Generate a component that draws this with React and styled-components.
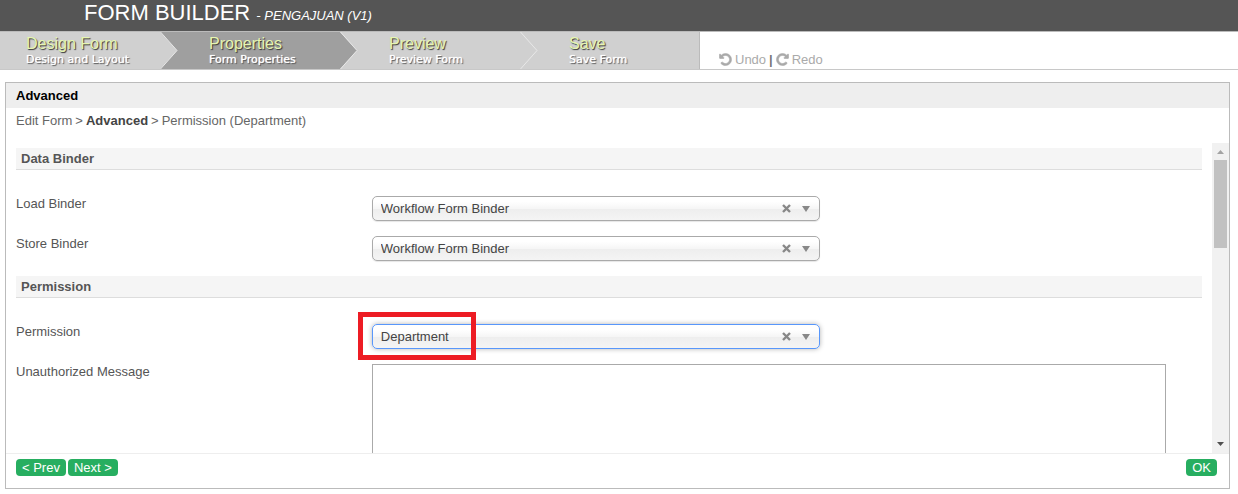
import React, { useState } from "react";
import styled, { createGlobalStyle } from "styled-components";

const GlobalStyle = createGlobalStyle`
  * { box-sizing: border-box; }
  body {
    margin: 0;
    background: #fff;
    color: #555;
    font: 13px/15px "Liberation Sans", Arial, sans-serif;
  }
  button, select, textarea { font: inherit; }
`;

const Page = styled.div`
  display: flex;
  flex-direction: column;
  height: 100vh;
`;

const Header = styled.header`
  flex: none;
  height: 31px;
  padding-left: 84px;
  background: #555;
  color: #fff;
`;

const Title = styled.h1`
  margin: 0;
  font-size: 22px;
  line-height: 25px;
  font-weight: normal;
  white-space: nowrap;
`;

const FormName = styled.em`
  font-size: 13px;
`;

const StepBar = styled.nav`
  flex: none;
  display: flex;
  height: 39px;
  border-top: 1px solid #bbb;
  border-bottom: 1px solid #c8c8c8;
`;

const Step = styled.a`
  display: flex;
  justify-content: space-between;
  width: ${(p) => (p.$last ? 160 : 180)}px;
  padding-left: ${(p) => (p.$first ? 26 : 29)}px;
  background: ${(p) => (p.$active ? "#9f9f9f" : "#d0d0d0")};
  border-right: ${(p) => (p.$last ? "1px solid #bbb" : "0")};
  text-decoration: none;
  white-space: nowrap;
`;

const StepText = styled.span`
  display: flex;
  flex-direction: column;
  width: 0;
  padding-top: 4px;
`;

const StepName = styled.span`
  color: #e6f5b0;
  font-size: 16px;
  line-height: 16px;
  text-shadow: 1px 1px 1px #333;
`;

const StepNote = styled.span`
  color: #fff;
  font: 11px/16px "DejaVu Sans", Verdana, sans-serif;
  text-shadow: 0 0 1px #fff, 1px 1px 1px #444;
`;

const History = styled.div`
  display: flex;
  align-items: center;
  gap: 3px;
  padding: 17px 0 0 19px;
`;

const Divider = styled.span`
  color: #777;
  font-weight: bold;
`;

const HistoryButton = styled.button`
  display: flex;
  align-items: center;
  gap: 3px;
  padding: 0;
  border: 0;
  background: none;
  color: #aaa;
`;

const Panel = styled.main`
  flex: 1;
  min-height: 0;
  display: flex;
  flex-direction: column;
  margin: 12px 8px 5px 5px;
  border: 1px solid #bbb;
`;

const PanelTitle = styled.h2`
  margin: 0;
  padding: 5px 10px;
  background: #eee;
  color: #000;
  font-size: 13px;
  line-height: 15px;
`;

const Breadcrumb = styled.nav`
  display: flex;
  gap: 3px;
  padding: 5px 10px 15px;
  color: #666;

  a { color: inherit; text-decoration: none; }
  strong { color: #444; }
`;

const ScrollArea = styled.div`
  flex: 1;
  min-height: 0;
  display: flex;
`;

const Form = styled.form`
  flex: 1;
  overflow: hidden;
  padding: 5px 10px 0;
`;

const SectionTitle = styled.h3`
  margin: 0 0 26px;
  padding: 3px 5px;
  border-bottom: 1px solid #ddd;
  background: #f5f5f5;
  font-size: 13px;
  line-height: 15px;
`;

const Row = styled.div`
  display: flex;
  min-height: 40px;
`;

const Label = styled.label`
  flex: none;
  width: 30%;
`;

const Value = styled.div`
  flex: 1;
  padding-right: 36px;
`;

const SelectFrame = styled.div`
  position: relative;
  display: flex;
  align-items: center;
  width: min(448px, 100%);
  height: 25px;
  padding-right: 9px;
  border: 1px solid ${(p) => (p.$focused ? "#5897fb" : "#aaa")};
  border-radius: 5px;
  background: linear-gradient(#fff 20%, #f6f6f6 50%, #eee 52%, #f4f4f4 100%);
  box-shadow: ${(p) => (p.$focused ? "0 0 5px rgba(0, 0, 0, 0.3)" : "0 1px 1px rgba(0, 0, 0, 0.1)")};
`;

const Select = styled.select`
  flex: 1;
  height: 23px;
  padding: 0 8px;
  border: 0;
  outline: 0;
  appearance: none;
  background: none;
  color: #444;
`;

const ClearButton = styled.button`
  display: flex;
  margin-right: 11px;
  padding: 0;
  border: 0;
  background: none;
`;

const Highlight = styled.div`
  position: absolute;
  top: -13px;
  left: -15px;
  width: 118px;
  height: 48px;
  border: 5px solid #ed1c24;
  pointer-events: none;
`;

const TextArea = styled.textarea`
  display: block;
  width: 100%;
  height: 150px;
  border: 1px solid #aaa;
  border-radius: 0;
  outline: 0;
  resize: none;
`;

const ScrollBar = styled.div`
  flex: none;
  display: flex;
  flex-direction: column;
  align-items: center;
  width: 17px;
  background: #f1f1f1;
`;

const ScrollArrow = styled.svg`
  flex: none;
  width: 17px;
  height: 17px;
`;

const ScrollThumb = styled.div`
  width: 13px;
  height: 88px;
  margin-bottom: auto;
  background: #c1c1c1;
`;

const Footer = styled.footer`
  display: flex;
  gap: 2px;
  padding: 5px 12px 12px 10px;
  border-top: 1px solid #eee;
`;

const Button = styled.button`
  height: 17px;
  margin-left: ${(p) => (p.$end ? "auto" : "0")};
  padding: 0 6px;
  border: 0;
  border-radius: 4px;
  background: #27ae60;
  color: #fff;
  line-height: 17px;
`;

const STEPS = [
  { name: "Design Form", note: "Design and Layout" },
  { name: "Properties", note: "Form Properties", active: true },
  { name: "Preview", note: "Preview Form" },
  { name: "Save", note: "Save Form" },
];

const StepArrow = ({ next }) => (
  <svg width="20" height="37" viewBox="0 0 20 37">
    <path d="M0 0H20V37H0L17 18.500Z" fill={next ? "#9f9f9f" : "#d0d0d0"} />
    <path d="M0.500 0L17 18.500L0.500 37" fill="none" stroke="#e8e8e8" />
  </svg>
);

const RotateIcon = ({ flipped }) => (
  <svg
    width="13"
    height="13"
    viewBox="-64 64 1664 1664"
    fill="currentColor"
    stroke="currentColor"
    strokeWidth="80"
  >
    <path
      transform={flipped ? "translate(1536 0) scale(-1 1)" : undefined}
      d="M1536 896q0 156-61 298t-164 245-245 164-298 61q-172 0-327-72.500T177 1387q-7-10-6.500-22.500t8.500-20.500l137-138q10-9 25-9 16 2 23 12 73 95 179 147t225 52q104 0 198.500-40.500T1130 1259t109.500-163.500T1280 896t-40.500-198.500T1130 534 966.500 424.500 768 384q-98 0-188 35.500T420 521l137 138q31 30 14 69-17 40-59 40H64q-26 0-45-19T0 704V256q0-42 40-59 39-17 69 14l130 129q107-101 244.500-156.500T768 128q156 0 298 61t245 164 164 245 61 298z"
    />
  </svg>
);

function SelectRow({ id, label, options, focused, highlighted }) {
  const [value, setValue] = useState(options[0]);
  return (
    <Row>
      <Label htmlFor={id}>{label}</Label>
      <Value>
        <SelectFrame $focused={focused}>
          <Select id={id} value={value} onChange={(e) => setValue(e.target.value)}>
            <option value="" />
            {options.map((o) => (
              <option key={o}>{o}</option>
            ))}
          </Select>
          <ClearButton type="button" aria-label={`Clear ${label}`} onClick={() => setValue("")}>
            <svg width="9" height="9" viewBox="0 0 9 9">
              <path d="M1 1L8 8M8 1L1 8" stroke="#888" strokeWidth="2.400" />
            </svg>
          </ClearButton>
          <svg width="8" height="6" viewBox="0 0 8 6">
            <path d="M0 0H8L4 6Z" fill="#888" />
          </svg>
          {highlighted && <Highlight />}
        </SelectFrame>
      </Value>
    </Row>
  );
}

export default function App() {
  return (
    <Page>
      <GlobalStyle />
      <Header>
        <Title>
          FORM BUILDER <FormName>- PENGAJUAN (V1)</FormName>
        </Title>
      </Header>
      <StepBar>
        {STEPS.map((s, i) => (
          <Step
            key={s.name}
            href="#"
            $active={s.active}
            $first={i === 0}
            $last={i === STEPS.length - 1}
          >
            <StepText>
              <StepName>{s.name}</StepName>
              <StepNote>{s.note}</StepNote>
            </StepText>
            {i < STEPS.length - 1 && <StepArrow next={STEPS[i + 1].active} />}
          </Step>
        ))}
        <History>
          <HistoryButton type="button">
            <RotateIcon />
            Undo
          </HistoryButton>
          <Divider>|</Divider>
          <HistoryButton type="button">
            <RotateIcon flipped />
            Redo
          </HistoryButton>
        </History>
      </StepBar>
      <Panel>
        <PanelTitle>Advanced</PanelTitle>
        <Breadcrumb>
          <a href="#">Edit Form</a>
          <span>&gt;</span>
          <strong>Advanced</strong>
          <span>&gt;</span>
          <a href="#">Permission (Department)</a>
        </Breadcrumb>
        <ScrollArea>
          <Form>
            <SectionTitle>Data Binder</SectionTitle>
            <SelectRow id="load" label="Load Binder" options={["Workflow Form Binder"]} />
            <SelectRow id="store" label="Store Binder" options={["Workflow Form Binder"]} />
            <SectionTitle>Permission</SectionTitle>
            <SelectRow
              id="permission"
              label="Permission"
              options={["Department"]}
              focused
              highlighted
            />
            <Row>
              <Label htmlFor="message">Unauthorized Message</Label>
              <Value>
                <TextArea id="message" />
              </Value>
            </Row>
          </Form>
          <ScrollBar aria-hidden="true">
            <ScrollArrow viewBox="0 0 17 17">
              <path d="M5 11H12L8.500 7Z" fill="#a3a3a3" />
            </ScrollArrow>
            <ScrollThumb />
            <ScrollArrow viewBox="0 0 17 17">
              <path d="M5 6H12L8.500 10Z" fill="#505050" />
            </ScrollArrow>
          </ScrollBar>
        </ScrollArea>
        <Footer>
          <Button type="button">&lt; Prev</Button>
          <Button type="button">Next &gt;</Button>
          <Button type="button" $end>OK</Button>
        </Footer>
      </Panel>
    </Page>
  );
}
